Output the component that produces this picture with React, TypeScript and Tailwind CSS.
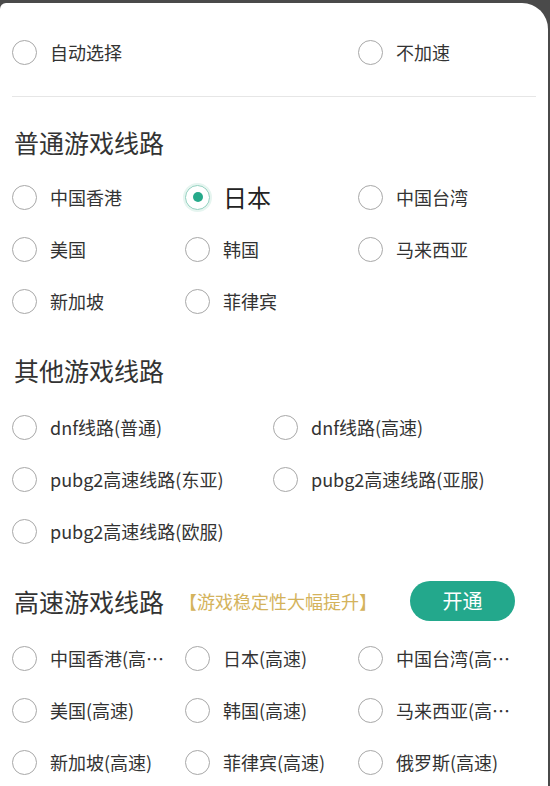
import React from 'react'

const FONT = { fontFamily: '"Noto Sans CJK SC", "Noto Sans", sans-serif' }

const NORMAL = ['中国香港', '日本', '中国台湾', '美国', '韩国', '马来西亚', '新加坡', '菲律宾']
const OTHER = ['dnf线路(普通)', 'dnf线路(高速)', 'pubg2高速线路(东亚)', 'pubg2高速线路(亚服)', 'pubg2高速线路(欧服)']
const FAST = [
  '中国香港(高速)',
  '日本(高速)',
  '中国台湾(高速)',
  '美国(高速)',
  '韩国(高速)',
  '马来西亚(高速)',
  '新加坡(高速)',
  '菲律宾(高速)',
  '俄罗斯(高速)',
]

function Radio({ checked }: { checked?: boolean }) {
  if (checked) {
    return (
      <span className="flex h-[25px] w-[25px] shrink-0 items-center justify-center rounded-full border-[1.5px] border-[#8fcfbd] shadow-[0_0_0_2px_#e6f5f0]">
        <span className="h-[10px] w-[10px] rounded-full bg-[#26a98a]" />
      </span>
    )
  }
  return <span className="h-[25px] w-[25px] shrink-0 rounded-full border border-[#a8a8a8]" />
}

function Option({ label, checked, truncate }: { label: string; checked?: boolean; truncate?: boolean }) {
  return (
    <div className="flex h-[52px] items-center gap-[13px]">
      <Radio checked={checked} />
      <span
        className={
          checked
            ? 'text-[24px] leading-none text-[#222]'
            : truncate
              ? 'w-[116px] truncate text-[18px] leading-[26px] text-[#333]'
              : 'text-[18px] leading-none text-[#333]'
        }
      >
        {label}
      </span>
    </div>
  )
}

export default function App() {
  return (
    <div className="h-[786px] w-[550px] overflow-hidden bg-[#4a4a4a]" style={FONT}>
      <div className="mr-[2px] mt-[3px] h-full rounded-tl-[6px] rounded-tr-[26px] bg-white">
        <div className="grid grid-cols-[173px_173px_1fr] px-[12px] pt-[23px]">
          <Option label="自动选择" />
          <div />
          <Option label="不加速" />
        </div>

        <div className="mx-[12px] mt-[18px] border-t border-[#e6e6e6]" />

        <h2 className="mt-[30px] px-[14px] text-[25px] leading-[30px] text-[#333]">普通游戏线路</h2>
        <div className="mt-[14px] grid grid-cols-[173px_173px_1fr] px-[12px]">
          {NORMAL.map((n) => (
            <Option key={n} label={n} checked={n === '日本'} />
          ))}
        </div>

        <h2 className="mt-[28px] px-[14px] text-[25px] leading-[30px] text-[#333]">其他游戏线路</h2>
        <div className="mt-[16px] grid grid-cols-[261px_1fr] px-[12px]">
          {OTHER.map((n) => (
            <Option key={n} label={n} />
          ))}
        </div>

        <div className="mt-[24px] flex h-[40px] items-center px-[14px]">
          <h2 className="text-[25px] leading-[30px] text-[#333]">高速游戏线路</h2>
          <span className="ml-[15px] text-[18px] text-[#d4b35c]">【游戏稳定性大幅提升】</span>
          <button className="ml-auto mr-[19px] flex h-[40px] w-[105px] items-center justify-center rounded-full bg-[#23a88c] text-[20px] text-white">
            开通
          </button>
        </div>
        <div className="mt-[11px] grid grid-cols-[173px_173px_1fr] px-[12px]">
          {FAST.map((n) => (
            <Option key={n} label={n} truncate />
          ))}
        </div>
      </div>
    </div>
  )
}
